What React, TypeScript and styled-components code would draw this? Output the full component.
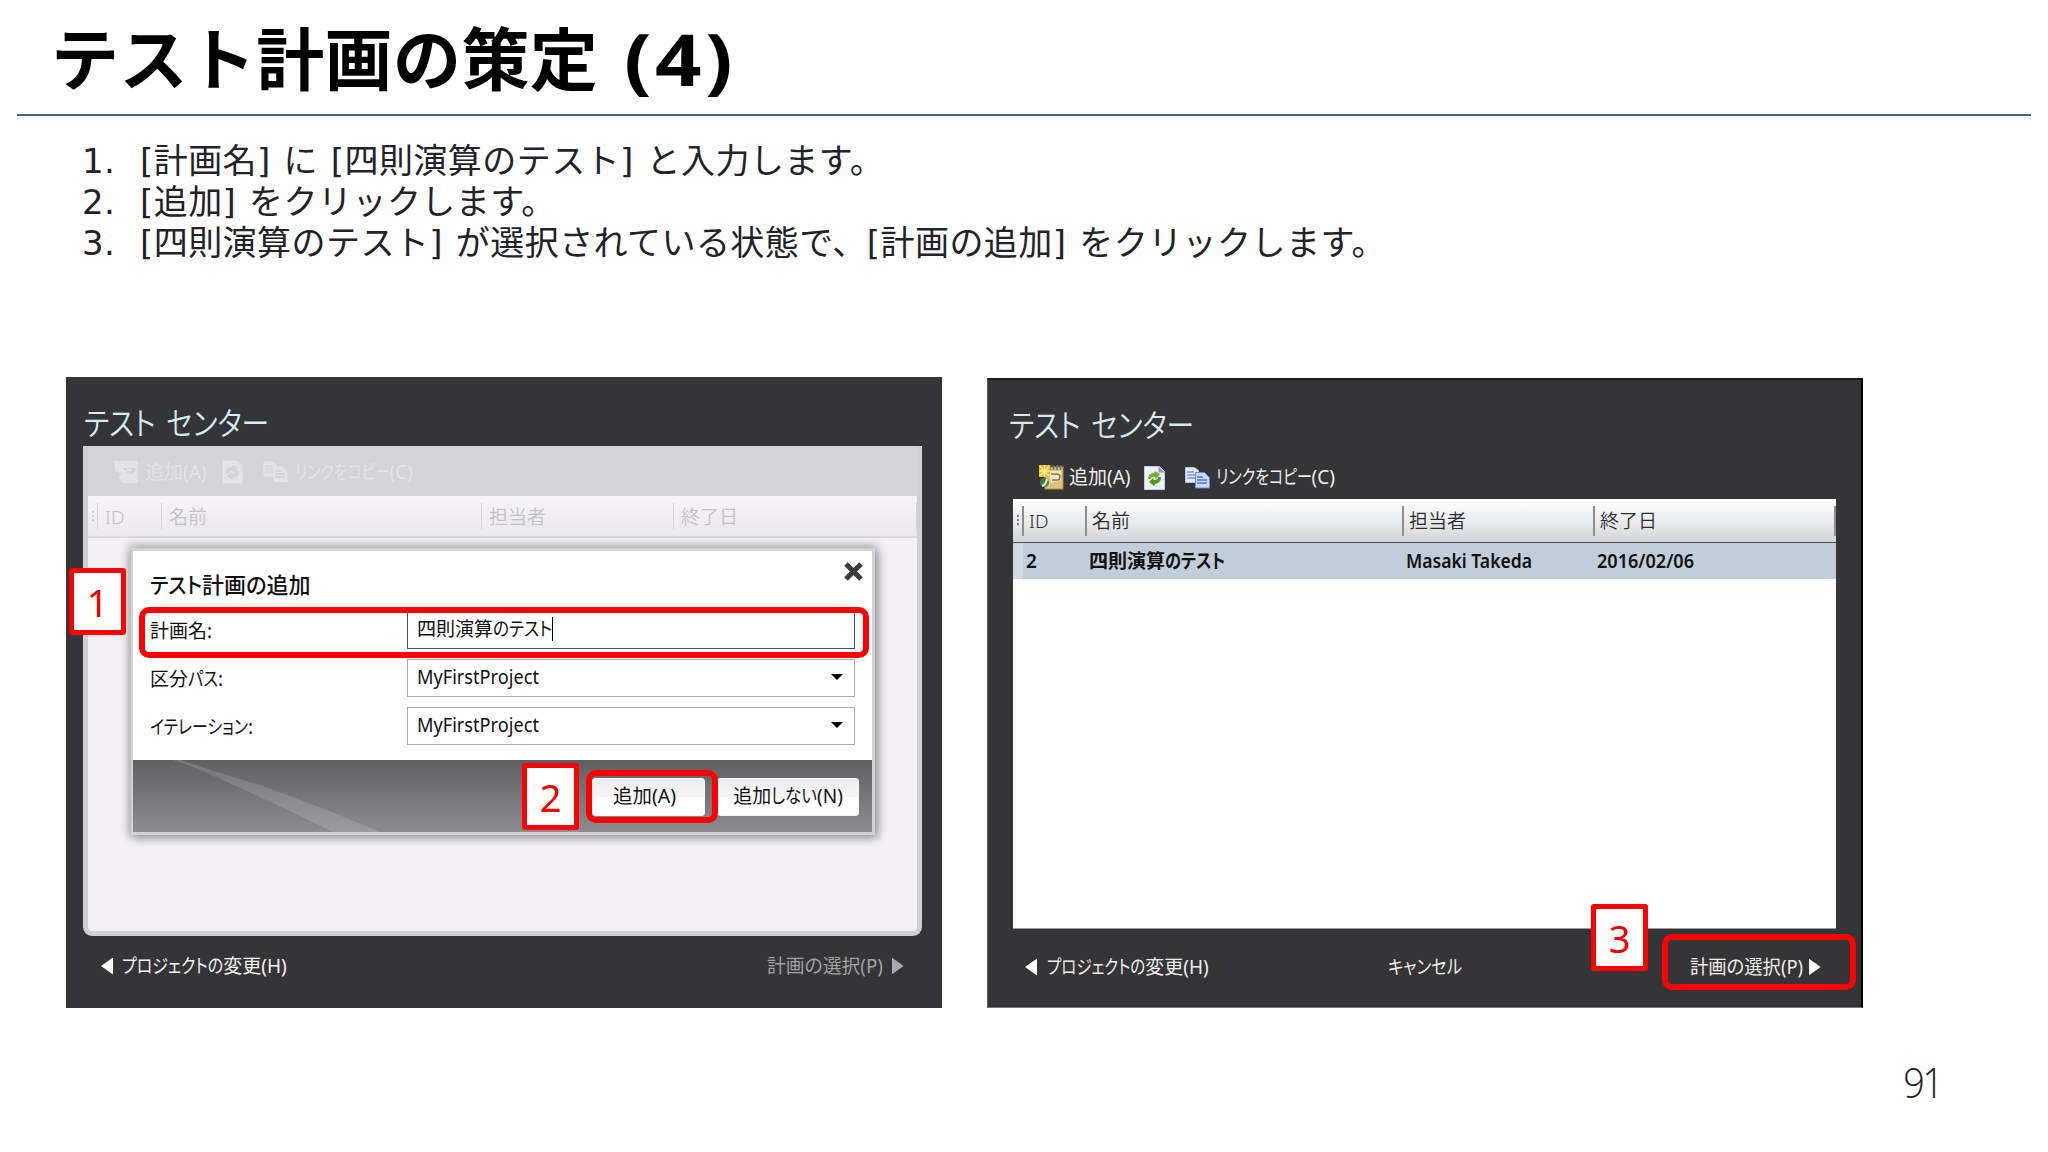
import React from "react";
import styled, { createGlobalStyle, css } from "styled-components";

const UI = `"Noto Sans", "Noto Sans CJK JP", sans-serif`;
const SLIDE = `"DejaVu Sans", "Noto Sans CJK JP", sans-serif`;

const Global = createGlobalStyle`
  *, *::before, *::after { box-sizing: border-box; }
  body { margin: 0; background: #fefefe; }
`;

const Slide = styled.main`
  position: relative;
  display: flex;
  flex-direction: column;
  width: 2048px;
  height: 1152px;
  overflow: hidden;
  background: #fefefe;
  font-family: ${UI};
`;

const Text = styled.span<{ $size?: number; $weight?: number; $color?: string }>`
  display: inline-block;
  flex: none;
  justify-self: start;
  white-space: pre;
  font-size: ${(p) => p.$size ?? 19}px;
  line-height: 1.4;
  font-weight: ${(p) => p.$weight ?? 400};
  color: ${(p) => p.$color ?? "#111"};
  font-feature-settings: "palt";
`;

/* Condensed run of glyphs: $from is the natural advance, $to the condensed one. */
const Narrow = styled.span<{ $from: number; $to: number }>`
  display: inline-block;
  transform: scaleX(${(p) => p.$to / p.$from});
  transform-origin: 0 50%;
  margin-right: ${(p) => p.$to - p.$from}px;
`;

const Header = styled.header`
  flex: none;
  height: 116px;
  margin: 0 17px;
  padding: 14px 0 0 34px;
  border-bottom: 2px solid #4a6284;
`;

const Title = styled.h1`
  display: flex;
  margin: 0;
  font: 700 68px/96px ${SLIDE};
  letter-spacing: 0.4px;
  color: #000;
  white-space: pre;
`;

const TitleNo = styled.span`
  margin-left: 26px;
  font: 700 72px/89px "Noto Sans", sans-serif;
  letter-spacing: 3px;
  transform: scaleX(1.13);
  transform-origin: 0 50%;
`;

const Steps = styled.ol`
  flex: none;
  list-style: none;
  margin: 0;
  padding: 25px 0 0 82px;
  height: 261px;
`;

const Step = styled.li`
  display: flex;
  height: 41px;
  font: 400 34px/41px ${SLIDE};
  letter-spacing: 0.45px;
  word-spacing: 1.5px;
  color: #222228;
  white-space: pre;
`;

const StepNo = styled.span`
  width: 58px;
`;

const Figures = styled.section`
  flex: none;
  display: flex;
  gap: 45px;
  padding-left: 66px;
`;

const Panel = styled.article<{ $framed?: boolean }>`
  position: relative;
  display: flex;
  flex-direction: column;
  width: 876px;
  height: 631px;
  background: #353436;
  ${(p) =>
    p.$framed &&
    css`
      margin-top: 1px;
      height: 630px;
      border: solid;
      border-width: 2px 2px 1px 1px;
      border-color: #1c1c1e #000 #77777a #5c5c5f;
    `}
`;

const PanelTitle = styled.div<{ $left: number; $h: number; $top: number }>`
  height: ${(p) => p.$h}px;
  padding: ${(p) => p.$top}px 0 0 ${(p) => p.$left}px;
  word-spacing: 4px;
`;

const Veiled = styled.div`
  display: flex;
  flex-direction: column;
  width: 839px;
  height: 490px;
  margin-left: 17px;
  border: 5px solid #d0cfd1;
  border-top: 0;
  border-radius: 0 0 9px 9px;
  background: #f3f1f4;
`;

const Toolbar = styled.div<{ $h: number; $left: number; $bg?: string }>`
  display: flex;
  align-items: center;
  height: ${(p) => p.$h}px;
  padding: 2px 0 0 ${(p) => p.$left}px;
  background: ${(p) => p.$bg ?? "transparent"};
`;

const Gap = styled.i<{ $w: number }>`
  flex: none;
  width: ${(p) => p.$w}px;
`;

const HeadRow = styled.div<{ $ghost?: boolean; $cols: string }>`
  display: grid;
  grid-template-columns: ${(p) => p.$cols};
  align-items: center;
  height: ${(p) => (p.$ghost ? 42 : 44)}px;
  background: ${(p) => (p.$ghost ? "linear-gradient(#f6f4f7, #ebe9ed)" : "linear-gradient(#fff, #ebecee 50%, #d3d4d9)")};
  border-bottom: ${(p) => (p.$ghost ? "2px solid #dad9dc" : "1px solid #50555c")};
`;

const HeadCell = styled.div<{ $ghost?: boolean; $last?: boolean }>`
  display: flex;
  align-items: center;
  height: ${(p) => (p.$ghost ? 26 : 30)}px;
  padding: 2px 0 0 ${(p) => (p.$ghost ? 7 : 5)}px;
  border-left: ${(p) => (p.$ghost ? "1px solid #d3d2d5" : "2px solid #8d8e92")};
  border-right: ${(p) => (p.$last ? (p.$ghost ? "1px solid #d3d2d5" : "2px solid #8d8e92") : "0")};
`;

const Grip = styled.i<{ $color: string }>`
  justify-self: center;
  width: 2px;
  height: 11px;
  background: repeating-linear-gradient(${(p) => p.$color} 0 2px, transparent 2px 4px);
`;

const Table = styled.div`
  display: flex;
  flex-direction: column;
  width: 823px;
  height: 430px;
  margin-left: 25px;
  background: #fefefe;
  border-bottom: 1px solid #9b9b9e;
`;

const DataRow = styled.div<{ $cols: string }>`
  display: grid;
  grid-template-columns: ${(p) => p.$cols};
  align-items: center;
  height: 36px;
  padding-top: 1px;
  background: linear-gradient(90deg, #d3d9df 10px, #c1cdda 10px);
`;

const DataCell = styled.div`
  display: flex;
  padding-left: 4px;
`;

const Foot = styled.footer<{ $pad: string }>`
  display: flex;
  align-items: center;
  flex: 1;
  padding: ${(p) => p.$pad};
`;

const Arrow = styled.i<{ $dir: "l" | "r"; $color?: string }>`
  flex: none;
  width: 12px;
  height: 17px;
  background: ${(p) => p.$color ?? "#fff"};
  clip-path: ${(p) => (p.$dir === "l" ? "polygon(100% 0, 100% 100%, 0 50%)" : "polygon(0 0, 100% 50%, 0 100%)")};
`;

const Dialog = styled.div`
  position: absolute;
  left: 65px;
  top: 171px;
  display: flex;
  flex-direction: column;
  width: 744px;
  height: 287px;
  border: 3px solid #d3d2d4;
  border-left-width: 2px;
  background: #fefefe;
  box-shadow: 0 0 9px 2px rgba(40, 40, 45, 0.4), 3px 3px 9px rgba(40, 40, 45, 0.2);
`;

const DialogHead = styled.div`
  display: flex;
  justify-content: space-between;
  height: 60px;
  padding: 18px 8px 0 17px;
`;

const CloseMark = styled.svg`
  width: 21px;
  height: 21px;
  margin-top: -8px;
`;

const Field = styled.label<{ $gap?: number }>`
  display: grid;
  grid-template-columns: 257px 448px;
  align-items: center;
  height: 38px;
  margin-bottom: ${(p) => p.$gap ?? 0}px;
  padding-left: 17px;
`;

const FieldName = styled.span`
  display: flex;
  padding-top: 2px;
`;

const Box = styled.span<{ $focus?: boolean }>`
  display: flex;
  align-items: center;
  justify-content: space-between;
  height: 38px;
  padding: 0 11px 2px 9px;
  border: 1px solid ${(p) => (p.$focus ? "#3e5273" : "#a8a7ab")};
`;

const Caret = styled.i`
  width: 1px;
  height: 24px;
  margin: 0 auto 0 0;
  background: #000;
`;

const Drop = styled.i`
  width: 12px;
  height: 6px;
  background: #000;
  clip-path: polygon(0 0, 100% 0, 50% 100%);
`;

const DialogFoot = styled.div`
  position: relative;
  display: flex;
  align-items: center;
  justify-content: flex-end;
  gap: 12px;
  height: 72px;
  padding: 1px 13px 0 0;
  background: linear-gradient(#605f61, #8d8c8e);
  margin-top: auto;
`;

const Swoosh = styled.svg`
  position: absolute;
  left: 0;
  top: 0;
`;

const Button = styled.button<{ $w: number; $nudge?: number }>`
  display: flex;
  align-items: center;
  justify-content: center;
  width: ${(p) => p.$w}px;
  height: 38px;
  padding: 0 ${(p) => p.$nudge ?? 0}px 0 0;
  border: 1px solid #f8f8f8;
  border-radius: 3px;
  background: linear-gradient(#ececee, #f6f6f7 50%, #fff 52%, #fff);
  font-family: inherit;
`;

const Mark = styled.div<{ $x: number; $y: number; $w: number; $h: number }>`
  position: absolute;
  left: ${(p) => p.$x}px;
  top: ${(p) => p.$y}px;
  width: ${(p) => p.$w}px;
  height: ${(p) => p.$h}px;
  border: 6px solid #fe0000;
  border-radius: 10px;
`;

const Badge = styled.div<{ $x: number; $y: number }>`
  position: absolute;
  left: ${(p) => p.$x}px;
  top: ${(p) => p.$y}px;
  display: flex;
  align-items: center;
  justify-content: center;
  width: 57px;
  height: 67px;
  border: 5px solid #fe0000;
  border-radius: 3px;
  background: #fefefe;
  font: 400 38px/50px "Noto Sans", sans-serif;
  color: #f00000;
`;

const PageNo = styled.div`
  margin: auto 107px 40px auto;
  font: 300 43px/60px "Open Sans", "Noto Sans", sans-serif;
  letter-spacing: -3px;
  transform: scaleX(0.88);
  transform-origin: 100% 50%;
  color: #1c1c1c;
`;

const AddIcon = ({ ghost }: { ghost?: boolean }) => (
  <svg width="25" height="25" viewBox="0 0 25 25" opacity={ghost ? 0.5 : 1}>
    {ghost ? (
      <path fill="#f4f3f5" fillRule="evenodd" d="M0 1h24v22H8l-3-5 2-5-6-2zM9 8l4 5 7 1 2-6zM13 9h5v2h-5z" />
    ) : (
      <>
        <rect x="6" y="2" width="18" height="22" fill="#dcc27a" stroke="#a98d45" />
        <path d="M11 0v5M14.500 0v5M18 0v5M21.500 0v5" stroke="#6c6c70" strokeWidth="1.5" />
        <path d="M9 6h13v9l-10 3z" fill="#f1e6bd" />
        <path d="M12 9h6q3 0 3 3t-3 3h-5" fill="none" stroke="#77776c" strokeWidth="1.4" />
        <rect x="0" y="0" width="11" height="12" fill="#efb72c" />
        <path d="M5.500 0v12M0 6h11M1 1l9 10M10 1L1 11" stroke="#ffef94" strokeWidth="1.4" />
        <circle cx="5.500" cy="17.500" r="4.500" fill="#3f7d4c" />
        <path d="M3 21q4-1 5-7" fill="none" stroke="#e4efdc" strokeWidth="2" />
      </>
    )}
  </svg>
);

const RefreshIcon = ({ ghost }: { ghost?: boolean }) => (
  <svg width="21" height="24" viewBox="0 0 21 24" opacity={ghost ? 0.5 : 1}>
    <path d="M.5.5h15l5 5v18H.5z" fill={ghost ? "#f4f3f5" : "#eef1f8"} stroke={ghost ? "none" : "#c6cbe0"} />
    {!ghost && <path d="M14.500 .5l6 6h-6z" fill="#8e92d6" />}
    <path d="M4 13q0-6 6-6l1-2 5 3-4 5-1-2q-4-1-4 2z" fill={ghost ? "#d4d3d5" : "#6bb52f"} />
    <path d="M17 11q0 6-6 7l-1 2-5-4 4-4 1 2q4 0 4-3z" fill={ghost ? "#d4d3d5" : "#4c9a24"} />
  </svg>
);

const CopyIcon = ({ ghost }: { ghost?: boolean }) => (
  <svg width="25" height="22" viewBox="0 0 25 22" opacity={ghost ? 0.5 : 1}>
    <path d="M.5.5h9l4 3v12H.5z" fill={ghost ? "#f4f3f5" : "#e3eafc"} stroke={ghost ? "none" : "#b7c6ee"} />
    <path d="M2 5h7M2 8h8M2 11h8" stroke={ghost ? "#d4d3d5" : "#7f9be4"} strokeWidth="1.3" />
    <path d="M10.500 5.500h9l5 5v10.500h-14z" fill={ghost ? "#f4f3f5" : "#cbd8f9"} stroke={ghost ? "none" : "#6a86d4"} />
    <path d="M12 10h6M12 13h10M12 16h10" stroke={ghost ? "#d4d3d5" : "#5476d2"} strokeWidth="1.5" />
  </svg>
);

const GHOST_COLS = "9px 64px 320px 192px 1fr";
const COLS = "9px 63px 317px 191px 1fr";
const HEADS = ["ID", "名前", "担当者", "終了日"];

const TableHead = ({ ghost }: { ghost?: boolean }) => (
  <HeadRow $ghost={ghost} $cols={ghost ? GHOST_COLS : COLS}>
    <Grip $color={ghost ? "#d0cfd2" : "#77787c"} />
    {HEADS.map((h, i) => (
      <HeadCell key={h} $ghost={ghost} $last={i === 3}>
        <Text $color={ghost ? "#c3c2c5" : "#2c2c30"} $weight={350}>{h}</Text>
      </HeadCell>
    ))}
  </HeadRow>
);

export default function App() {
  return (
    <Slide>
      <Global />
      <Header>
        <Title>テスト計画の策定<TitleNo>(4)</TitleNo></Title>
      </Header>
      <Steps>
        <Step><StepNo>1.</StepNo>[計画名] に [四則演算のテスト] と入力します。</Step>
        <Step><StepNo>2.</StepNo>[追加] をクリックします。</Step>
        <Step><StepNo>3.</StepNo>[四則演算のテスト] が選択されている状態で、[計画の追加] をクリックします。</Step>
      </Steps>
      <Figures>
        <Panel>
          <PanelTitle $h={69} $top={24} $left={18}>
            <Text $size={32} $weight={350} $color="#d4ecf6"><Narrow $from={213} $to={185}>テスト センター</Narrow></Text>
          </PanelTitle>
          <Veiled>
            <Toolbar $h={50} $left={26} $bg="#d4d3d5">
              <AddIcon ghost />
              <Gap $w={6} />
              <Text $color="#e4e3e5">追加(A)</Text>
              <Gap $w={15} />
              <RefreshIcon ghost />
              <Gap $w={20} />
              <CopyIcon ghost />
              <Gap $w={7} />
              <Text $color="#e4e3e5"><Narrow $from={121.5} $to={95}>リンクをコピー</Narrow>(C)</Text>
            </Toolbar>
            <TableHead ghost />
          </Veiled>
          <Foot $pad="0 0 12px 35px">
            <Arrow $dir="l" />
            <Gap $w={9} />
            <Text $color="#f2f2f2"><Narrow $from={120} $to={101}>プロジェクトの</Narrow>変更(H)</Text>
            <Gap $w={480} />
            <Text $color="#a2a1a3"><Narrow $from={117.2} $to={116}>計画の選択(P)</Narrow></Text>
            <Gap $w={9} />
            <Arrow $dir="r" $color="#a9a8aa" />
          </Foot>
          <Dialog>
            <DialogHead>
              <Text $size={22} $weight={500}><Narrow $from={56.7} $to={52}>テスト</Narrow>計画<Narrow $from={21.2} $to={20.5}>の</Narrow>追加</Text>
              <CloseMark viewBox="0 0 21 21">
                <path d="M3 3l15 15M18 3L3 18" stroke="#3a3a3d" strokeWidth="5" />
              </CloseMark>
            </DialogHead>
            <Field $gap={10}>
              <FieldName><Text>計画名:</Text></FieldName>
              <Box $focus>
                <Text>四則演算<Narrow $from={67.3} $to={59}>のテスト</Narrow></Text>
                <Caret />
              </Box>
            </Field>
            <Field $gap={10}>
              <FieldName><Text>区分<Narrow $from={35} $to={30}>パス</Narrow>:</Text></FieldName>
              <Box><Text><Narrow $from={127.6} $to={122}>MyFirstProject</Narrow></Text><Drop /></Box>
            </Field>
            <Field>
              <FieldName><Text><Narrow $from={117.3} $to={98}>イテレーション</Narrow>:</Text></FieldName>
              <Box><Text><Narrow $from={127.6} $to={122}>MyFirstProject</Narrow></Text><Drop /></Box>
            </Field>
            <DialogFoot>
              <Swoosh width="260" height="72" viewBox="0 0 260 72">
                <path d="M40 0Q66 7 200 72H247Q150 31 94 15Q65 6 48 0z" fill="#fff" opacity=".14" />
              </Swoosh>
              <Button $w={113} $nudge={7}><Text><Narrow $from={61.5} $to={63}>追加(A)</Narrow></Text></Button>
              <Button $w={142}><Text>追加<Narrow $from={52.8} $to={46}>しない</Narrow>(N)</Text></Button>
            </DialogFoot>
          </Dialog>
          <Mark $x={73} $y={230} $w={730} $h={51} />
          <Badge $x={3} $y={191}>1</Badge>
          <Badge $x={456} $y={386}>2</Badge>
          <Mark $x={520} $y={393} $w={132} $h={53} />
        </Panel>
        <Panel $framed>
          <PanelTitle $h={74} $top={23} $left={21}>
            <Text $size={32} $weight={350} $color="#d6e8ef"><Narrow $from={213} $to={185}>テスト センター</Narrow></Text>
          </PanelTitle>
          <Toolbar $h={45} $left={51}>
            <AddIcon />
            <Gap $w={5} />
            <Text $color="#eee">追加(A)</Text>
            <Gap $w={13} />
            <RefreshIcon />
            <Gap $w={20} />
            <CopyIcon />
            <Gap $w={6} />
            <Text $color="#eee"><Narrow $from={121.5} $to={96}>リンクをコピー</Narrow>(C)</Text>
          </Toolbar>
          <Table>
            <TableHead />
            <DataRow $cols={COLS}>
              <i />
              <DataCell><Text $weight={600}>2</Text></DataCell>
              <DataCell><Text $weight={600}>四則演算<Narrow $from={70} $to={60}>のテスト</Narrow></Text></DataCell>
              <DataCell><Text $weight={600}><Narrow $from={136.5} $to={126}>Masaki Takeda</Narrow></Text></DataCell>
              <DataCell><Text $weight={600}><Narrow $from={102.1} $to={97}>2016/02/06</Narrow></Text></DataCell>
            </DataRow>
          </Table>
          <Foot $pad="0 0 2px 37px">
            <Arrow $dir="l" />
            <Gap $w={10} />
            <Text $color="#eee"><Narrow $from={120} $to={98}>プロジェクトの</Narrow>変更(H)</Text>
            <Gap $w={179} />
            <Text $color="#eee"><Narrow $from={86.1} $to={74}>キャンセル</Narrow></Text>
            <Gap $w={228} />
            <Text $color="#eee"><Narrow $from={117.2} $to={113}>計画の選択(P)</Narrow></Text>
            <Gap $w={6} />
            <Arrow $dir="r" />
          </Foot>
          <Badge $x={603} $y={524}>3</Badge>
          <Mark $x={674} $y={554} $w={194} $h={56} />
        </Panel>
      </Figures>
      <PageNo>91</PageNo>
    </Slide>
  );
}
